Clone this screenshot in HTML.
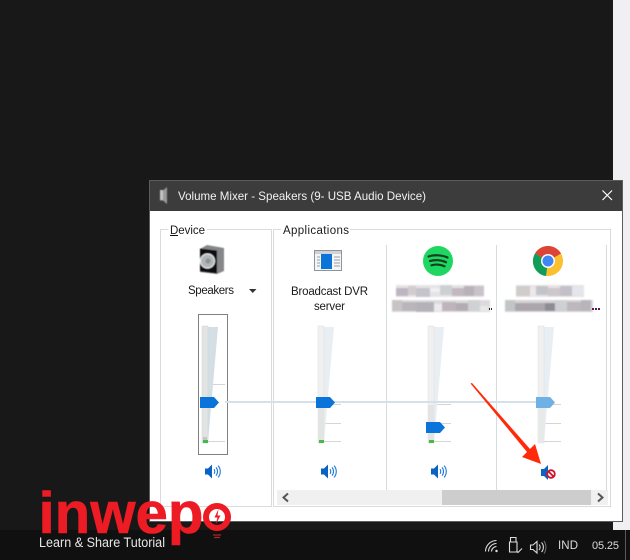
<!DOCTYPE html>
<html><head><meta charset="utf-8"><title>Volume Mixer</title>
<style>
html,body{margin:0;padding:0;background:#181818;width:630px;height:560px;overflow:hidden}
svg{display:block;position:absolute;left:0;top:0}
text{font-family:"Liberation Sans",sans-serif}
</style></head><body>
<svg width="630" height="560" viewBox="0 0 630 560" xmlns="http://www.w3.org/2000/svg">
<defs>
<g id="spk">
<path d="M0 4.500H3L7 0.500V14.500L3 10.500H0Z" fill="#0a63c4"/>
<path d="M9 5.200C10 6.400 10 8.600 9 9.800M11 3.400C13 5.600 13 9.400 11 11.600M13 1.600C16 4.600 16 10.400 13 13.400" fill="none" stroke="#1b78d8" stroke-width="1.100"/>
</g>
<path id="thumb" d="M0 0H14L19 5.500L14 11H0Z"/>
<filter id="bl" x="-5%" y="-20%" width="110%" height="140%"><feGaussianBlur stdDeviation="0.8"/></filter>
<filter id="bs" x="-10%" y="-10%" width="120%" height="120%"><feGaussianBlur stdDeviation="0.4"/></filter>
</defs>
<rect width="630" height="560" fill="#181818"/>
<rect x="613" y="0" width="17" height="530" fill="#f0eff1"/>
<rect x="0" y="530" width="630" height="30" fill="#101010"/>
<rect x="625" y="530" width="1" height="30" fill="#5a5a5a"/>

<!-- window -->
<rect x="149" y="180" width="474" height="342" fill="#5c5c5c"/>
<rect x="150" y="181" width="472" height="30" fill="#3c3c3c"/>
<rect x="150" y="211" width="472" height="310" fill="#fff"/>
<g filter="url(#bs)">
<path d="M160 190.500h3l4-3.500v17l-4-3.500h-3z" fill="#9a9a9a"/>
<rect x="160" y="190" width="3" height="10" fill="#c4c4c4"/>
</g>
<text x="178" y="200" font-size="12" fill="#f2f2f2" textLength="248" lengthAdjust="spacingAndGlyphs">Volume Mixer - Speakers (9- USB Audio Device)</text>
<path d="M602.500 190.500L612 200M612 190.500L602.500 200" stroke="#fff" stroke-width="1.200" fill="none"/>

<!-- group boxes -->
<rect x="160.500" y="229.500" width="111" height="277" fill="none" stroke="#d9dcdc"/>
<rect x="273.500" y="229.500" width="337" height="277" fill="none" stroke="#d9dcdc"/>
<rect x="168" y="224" width="39" height="12" fill="#fff"/>
<rect x="281" y="224" width="69" height="12" fill="#fff"/>
<text x="170" y="234" font-size="11.500" fill="#1a1a1a" textLength="35">Device</text>
<rect x="170" y="235" width="8" height="1" fill="#111"/>
<text x="283" y="234" font-size="11.500" fill="#1a1a1a" textLength="66">Applications</text>

<!-- separators -->
<rect x="386" y="245" width="1" height="245" fill="#d5dddf"/>
<rect x="496" y="245" width="1" height="245" fill="#d5dddf"/>
<rect x="606" y="245" width="1" height="245" fill="#d5dddf"/>

<!-- speaker device icon -->
<g filter="url(#bs)">
<path d="M200 249L207 245L224 248V271L217 274L200 272Z" fill="#85878a"/>
<path d="M200 248.500L217 250.500V273.500L200 271.500Z" fill="#111"/>
<circle cx="207.500" cy="261" r="7" fill="#b0b6b8" stroke="#e4e6e6" stroke-width="1.200"/>
<circle cx="208" cy="261" r="2.500" fill="#8b9194"/>
</g>
<text x="188" y="294" font-size="11.500" fill="#1a1a1a" textLength="46">Speakers</text>
<path d="M249 289h7.500l-3.750 4z" fill="#333"/>

<!-- broadcast icon -->
<rect x="314.500" y="250.500" width="27" height="20" fill="#f3f5f6" stroke="#8e9499"/>
<rect x="315" y="251" width="26" height="3" fill="#cfd3d6"/>
<rect x="321" y="254" width="11" height="15" fill="#0b74d6"/>
<path d="M317 257h3M317 260h3M317 263h3M317 266h3M334 257h6M334 260h6M334 263h6M334 266h6" stroke="#9aa0a5" stroke-width="1"/>
<text x="291" y="295" font-size="11.500" fill="#1a1a1a" textLength="77">Broadcast DVR</text>
<text x="314" y="310" font-size="11.500" fill="#1a1a1a" textLength="31">server</text>

<!-- spotify -->
<circle cx="438" cy="261" r="15" fill="#1ed760"/>
<path d="M428.500 256.500C434 254.500 442 255 447.500 257.500M430 261C435 259.500 441.500 260 446 262.200M431.500 265.300C435.500 264.200 440.500 264.500 444.500 266.300" fill="none" stroke="#173d22" stroke-width="2.200" stroke-linecap="round"/>

<!-- chrome -->
<circle cx="548" cy="261" r="15" fill="#fbc02d"/>
<path d="M548 261L535 253.500A15 15 0 0 1 561 253.500Z" fill="#db4437"/>
<path d="M548 261L535 253.500A15 15 0 0 0 546 276Z" fill="#0f9d58"/>
<circle cx="548" cy="261" r="7" fill="#fff"/>
<circle cx="548" cy="261" r="5.500" fill="#4285f4"/>

<!-- pixelated names -->
<g filter="url(#bl)">
<rect x="396" y="285" width="88" height="12" fill="#e6e3e6"/>
<rect x="396" y="288" width="12" height="8" fill="#bdb6c0"/><rect x="408" y="286" width="8" height="9" fill="#d2ccce"/><rect x="416" y="288" width="14" height="9" fill="#c4c4cc"/><rect x="430" y="288" width="10" height="4" fill="#eef0f2"/><rect x="440" y="285" width="12" height="10" fill="#ccd0d3"/><rect x="452" y="288" width="12" height="8" fill="#c2b8c0"/><rect x="464" y="286" width="10" height="10" fill="#b8b1b8"/><rect x="474" y="286" width="10" height="10" fill="#c8c3c8"/>
<rect x="392" y="300" width="98" height="12" fill="#dcdadd"/>
<rect x="392" y="300" width="10" height="11" fill="#c8c4c6"/><rect x="402" y="302" width="14" height="9" fill="#bab5bb"/><rect x="416" y="302" width="18" height="10" fill="#b4b2b8"/><rect x="434" y="304" width="8" height="7" fill="#eceaec"/><rect x="442" y="302" width="14" height="9" fill="#c0b4bc"/><rect x="456" y="303" width="12" height="8" fill="#b3acb2"/><rect x="468" y="300" width="12" height="11" fill="#cfd1d4"/><rect x="480" y="306" width="8" height="5" fill="#e9e9eb"/>
<rect x="516" y="285" width="68" height="12" fill="#e6e3e6"/>
<rect x="516" y="286" width="14" height="10" fill="#d0ccc9"/><rect x="530" y="288" width="6" height="8" fill="#ede9ea"/><rect x="536" y="286" width="12" height="9" fill="#c3c4ca"/><rect x="548" y="288" width="12" height="8" fill="#cdc7cb"/><rect x="560" y="286" width="12" height="10" fill="#c4bfc8"/><rect x="572" y="288" width="12" height="6" fill="#e4e6ee"/>
<rect x="505" y="300" width="88" height="12" fill="#d6d3d6"/>
<rect x="505" y="300" width="10" height="11" fill="#c2c5c8"/><rect x="515" y="303" width="30" height="8" fill="#aaa6ac"/><rect x="545" y="303" width="10" height="8" fill="#8f8c94"/><rect x="555" y="300" width="12" height="11" fill="#cfd0d4"/><rect x="567" y="302" width="14" height="9" fill="#bcb8bc"/><rect x="581" y="300" width="10" height="11" fill="#b7b5b9"/>
</g>
<rect x="489" y="308" width="1" height="2" fill="#222"/><rect x="491" y="308" width="1" height="2" fill="#333"/>
<rect x="592" y="308" width="2" height="2" fill="#7a1040"/><rect x="595" y="308" width="2" height="2" fill="#203080"/><rect x="598" y="308" width="2" height="2" fill="#701030"/>

<!-- dotted focus -->
<rect x="198.500" y="314.500" width="29" height="140" fill="none" stroke="#000" stroke-dasharray="1 1" shape-rendering="crispEdges"/>

<!-- sliders: ticks -->
<g fill="#d4d6d6">
<rect x="208" y="384" width="17" height="1"/><rect x="208" y="441" width="17" height="1"/>
<rect x="324" y="404" width="17" height="1"/><rect x="324" y="423" width="17" height="1"/><rect x="324" y="441" width="17" height="1"/>
<rect x="434" y="404" width="17" height="1"/><rect x="434" y="423" width="17" height="1"/><rect x="434" y="441" width="17" height="1"/>
<rect x="544" y="404" width="17" height="1"/><rect x="544" y="423" width="17" height="1"/><rect x="544" y="441" width="17" height="1"/>
</g>
<!-- sliders: device -->
<path d="M208 327H218L208 442Z" fill="#d3dee5"/>
<rect x="202" y="326" width="6" height="117" fill="#e2e3e3" stroke="#d4d4d4" stroke-width=".5"/>
<rect x="203" y="437" width="4" height="4" fill="#c6c6c6"/>
<rect x="203" y="440" width="5" height="3" fill="#45b94a"/>
<!-- app1 -->
<path d="M324 327H334L324 442Z" fill="#e9eef2"/>
<rect x="318" y="326" width="6" height="117" fill="#f0f0f0" stroke="#e0e0e0" stroke-width=".5"/>
<rect x="318" y="408" width="6" height="35" fill="#e3e4e4"/>
<rect x="319" y="440" width="5" height="3" fill="#45b94a"/>
<!-- app2 -->
<path d="M434 327H444L434 442Z" fill="#e9eef2"/>
<rect x="428" y="326" width="6" height="117" fill="#f0f0f0" stroke="#e0e0e0" stroke-width=".5"/>
<rect x="428" y="405" width="6" height="38" fill="#e3e4e4"/>
<rect x="429" y="440" width="5" height="3" fill="#45b94a"/>
<!-- app3 -->
<path d="M544 327H554L544 442Z" fill="#e9eef2"/>
<rect x="538" y="326" width="6" height="117" fill="#f0f0f0" stroke="#e0e0e0" stroke-width=".5"/>
<rect x="538" y="408" width="6" height="35" fill="#e8e9e9"/>

<!-- link line -->
<rect x="225" y="401" width="312" height="2" fill="#d5e0e8"/>

<!-- thumbs -->
<use href="#thumb" x="200" y="397" fill="#0a74da"/>
<use href="#thumb" x="316" y="397" fill="#0a74da"/>
<use href="#thumb" x="426" y="422" fill="#0a74da"/>
<use href="#thumb" x="536" y="397" fill="#6fb0e6"/>

<!-- speaker icons -->
<use href="#spk" x="205" y="464"/>
<use href="#spk" x="321" y="464"/>
<use href="#spk" x="431" y="464"/>
<path d="M541 469H544L548 465V480L544 476H541Z" fill="#0a63c4"/>
<circle cx="551" cy="474" r="3.800" fill="#fff" stroke="#d0122a" stroke-width="1.800"/>
<path d="M548.500 471.500L553.500 476.500" stroke="#d0122a" stroke-width="1.800"/>

<!-- scrollbar -->
<rect x="277" y="490" width="331" height="15" fill="#f0f0f0"/>
<rect x="442" y="490" width="149" height="15" fill="#cdcdcd"/>
<path d="M288 493.500L283.500 497.500L288 501.500" fill="none" stroke="#555" stroke-width="2"/>
<path d="M598 493.500L602.500 497.500L598 501.500" fill="none" stroke="#555" stroke-width="2"/>

<!-- red arrow -->
<path d="M470.500 383.500L472 383L530 449L535 444L541 464L522 457L527 452Z" fill="#ff2a0a"/>

<!-- logo -->
<text x="38.500" y="533" font-size="58" font-weight="700" fill="#ed1c24" stroke="#ed1c24" stroke-width=".6" textLength="165" lengthAdjust="spacingAndGlyphs">inwep</text>
<circle cx="217" cy="517" r="11" fill="none" stroke="#ed1c24" stroke-width="6"/>
<path d="M213 535h8M214 537.500h6" stroke="#a8262a" stroke-width="1.300"/>
<path d="M218.500 509L214.500 517.500H217.500L215.500 525L220.500 515.500H217.500Z" fill="#ed1c24"/>
<text x="39" y="547" font-size="13.500" fill="#e6e6e6" textLength="126" lengthAdjust="spacingAndGlyphs">Learn &amp; Share Tutorial</text>

<!-- tray -->
<g fill="none" stroke="#dcdcdc" stroke-width="1.100">
<path d="M485.500 551.500C485.500 545.500 490.500 540.500 496.500 540.500M488.500 551.500C488.500 547.500 492 543.500 496.500 543.500M491.500 551.500C491.500 549 494 546.500 496.500 546.500"/>
<path d="M510.500 537.500H516V542H510.500ZM509.500 542H517V552H509.500Z"/>
<path d="M516.500 551L518 552.500L522 548.500"/>
<path d="M530.500 545H533L537 541.500V553L533 549.500H530.500Z"/>
<path d="M539 544.500C540.500 546 540.500 548.500 539 550M541.500 542.500C544 545 544 549.500 541.500 552"/>
<path d="M544 541C546.500 544.500 546.500 550 544 553.500" stroke="#6a6a6a"/>
</g>
<circle cx="496.500" cy="551" r="1.200" fill="#e0e0e0"/>
<text x="558" y="549" font-size="11.500" fill="#dcdcdc" textLength="20">IND</text>
<text x="592" y="549" font-size="11" fill="#dcdcdc" textLength="27">05.25</text>
</svg>
</body></html>
